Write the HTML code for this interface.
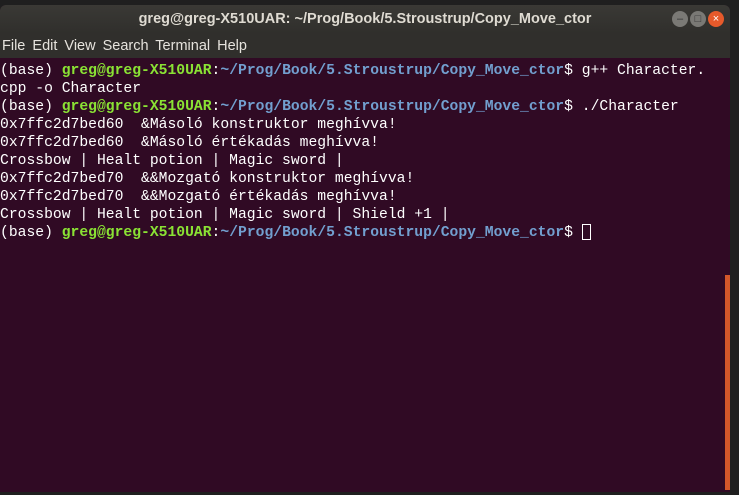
<!DOCTYPE html><html><head><meta charset="utf-8"><style>
body{margin:0;width:739px;height:495px;background:#1f1f1f;overflow:hidden;position:relative;font-family:"Liberation Sans",sans-serif}
.win{position:absolute;left:0;top:5px;width:730px;height:487px;background:#300a24;border-radius:6px 6px 0 0;overflow:hidden}
.title{height:28px;background:linear-gradient(#3a3935,#302f2c);color:#dfdbd2;font-weight:bold;font-size:14.5px;text-align:center;line-height:29px}
.menu{height:25px;background:#302f2c;color:#e6e3dd;font-size:14.5px;line-height:27px;padding-left:2px;word-spacing:3px}
.btns{position:absolute;right:6px;top:6px}
.b{display:inline-block;width:16px;height:16px;border-radius:50%;background:#7a7975;margin-left:2px;vertical-align:top;color:#333;font-size:11px;line-height:16px;text-align:center}
.term{position:absolute;left:0;top:57px;font-family:"Liberation Mono",monospace;font-size:14.7px;line-height:18px;color:#fff;white-space:pre}
.g{color:#8ae234;font-weight:bold}.bl{color:#729fcf;font-weight:bold}
.cur{display:inline-block;width:9px;height:16px;border:1px solid #fff;vertical-align:-4px;box-sizing:border-box}
.sb{position:absolute;right:0;top:270px;width:5px;height:215px;background:#d3572a}
</style></head><body>
<div class="win">
<div class="title">greg@greg-X510UAR: ~/Prog/Book/5.Stroustrup/Copy_Move_ctor</div>
<div class="btns"><span class="b">–</span><span class="b">□</span><span class="b" style="background:#e75a2b;color:#fff">×</span></div>
<div class="menu">File  Edit  View  Search  Terminal  Help</div>
<div class="term">(base) <span class="g">greg@greg-X510UAR</span>:<span class="bl">~/Prog/Book/5.Stroustrup/Copy_Move_ctor</span>$ g++ Character.
cpp -o Character
(base) <span class="g">greg@greg-X510UAR</span>:<span class="bl">~/Prog/Book/5.Stroustrup/Copy_Move_ctor</span>$ ./Character
0x7ffc2d7bed60  &amp;Másoló konstruktor meghívva!
0x7ffc2d7bed60  &amp;Másoló értékadás meghívva!
Crossbow | Healt potion | Magic sword |
0x7ffc2d7bed70  &amp;&amp;Mozgató konstruktor meghívva!
0x7ffc2d7bed70  &amp;&amp;Mozgató értékadás meghívva!
Crossbow | Healt potion | Magic sword | Shield +1 |
(base) <span class="g">greg@greg-X510UAR</span>:<span class="bl">~/Prog/Book/5.Stroustrup/Copy_Move_ctor</span>$ <span class="cur"></span></div>
<div class="sb"></div>
</div>
</body></html>
